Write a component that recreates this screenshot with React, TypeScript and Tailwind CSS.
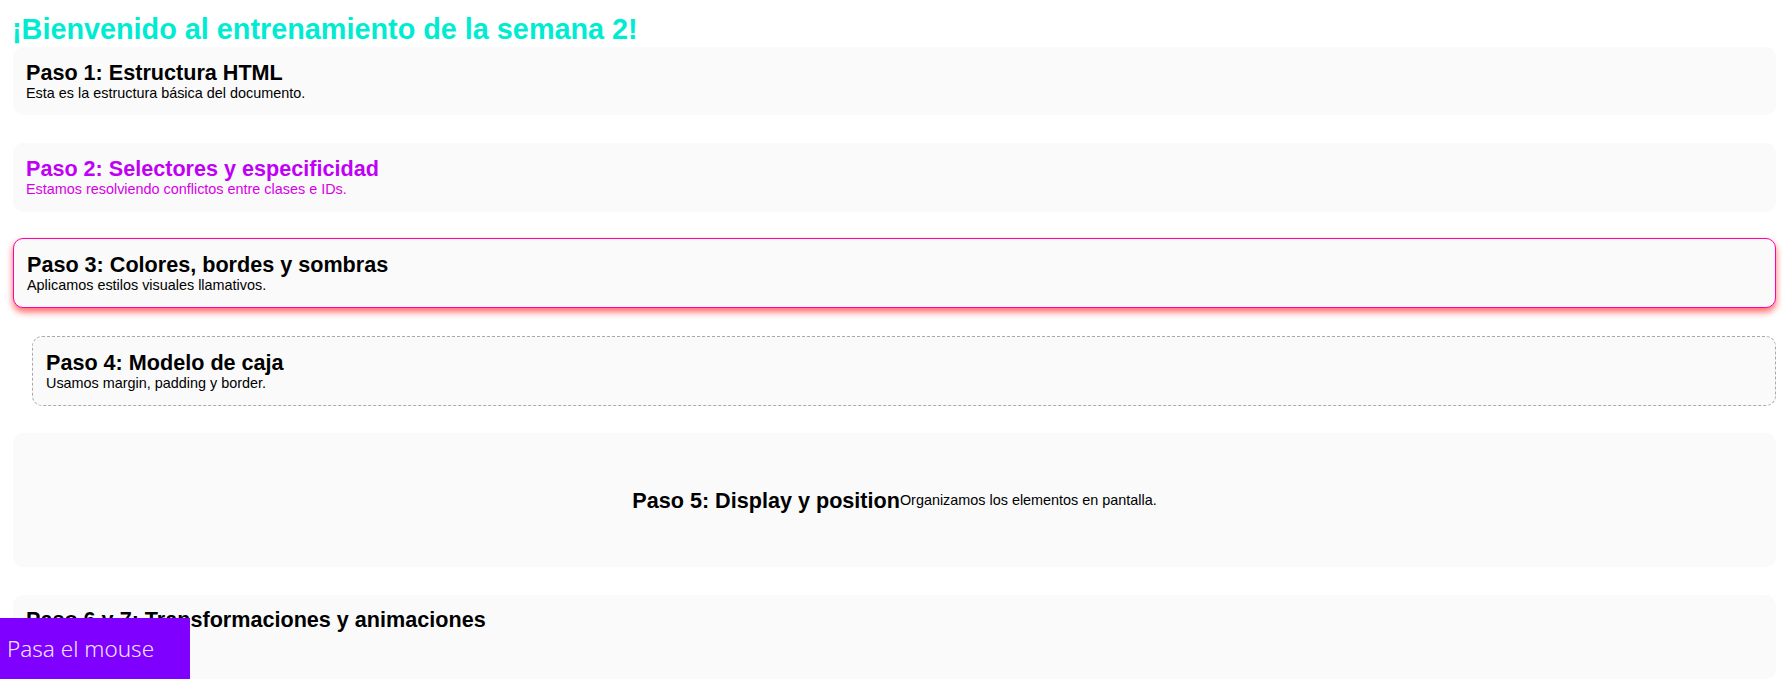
export default function App() {
  const sans = { fontFamily: '"Liberation Sans", Arial, sans-serif' };
  return (
    <div
      className="relative min-h-[700px] bg-white pl-[13px] pr-[7px] pt-[13px] text-black"
      style={sans}
    >
      <h1 className="ml-[-1px] text-[28.8px] font-bold leading-[33px] text-[#00ecd2]">
        ¡Bienvenido al entrenamiento de la semana 2!
      </h1>

      <div className="mt-[1px] flex flex-col gap-[28px]">
        <section className="rounded-[10px] bg-[#fafafa] p-[13px]">
          <h2 className="text-[21.6px] font-bold leading-[25px]">
            Paso 1: Estructura HTML
          </h2>
          <p className="text-[14.4px] leading-[17px]">
            Esta es la estructura básica del documento.
          </p>
        </section>

        <section className="rounded-[10px] bg-[#fafafa] px-[13px] pb-[14px] pt-[13px]">
          <h2 className="text-[21.6px] font-bold leading-[25px] text-[#c000f5]">
            Paso 2: Selectores y especificidad
          </h2>
          <p className="text-[14.4px] leading-[17px] text-[#d600e6]">
            Estamos resolviendo conflictos entre clases e IDs.
          </p>
        </section>

        <section className="-mt-[2px] rounded-[10px] border border-[#ff00aa] bg-[#fafafa] p-[13px] shadow-[0_4px_7px_rgba(255,0,0,0.6)]">
          <h2 className="text-[21.6px] font-bold leading-[25px]">
            Paso 3: Colores, bordes y sombras
          </h2>
          <p className="text-[14.4px] leading-[17px]">
            Aplicamos estilos visuales llamativos.
          </p>
        </section>

        <section className="ml-[19px] rounded-[10px] border border-dashed border-[#aaaaaa] bg-[#fafafa] p-[13px]">
          <h2 className="text-[21.6px] font-bold leading-[25px]">
            Paso 4: Modelo de caja
          </h2>
          <p className="text-[14.4px] leading-[17px]">
            Usamos margin, padding y border.
          </p>
        </section>

        <section className="-mt-[1px] flex h-[134px] items-center justify-center rounded-[10px] bg-[#fafafa] p-[13px]">
          <h2 className="text-[21.6px] font-bold leading-[25px]">
            Paso 5: Display y position
          </h2>
          <p className="text-[14.4px] leading-[17px]">
            Organizamos los elementos en pantalla.
          </p>
        </section>

        <section className="h-[84px] rounded-[10px] bg-[#fafafa] px-[13px] pt-[12px]">
          <h2 className="text-[21.6px] font-bold leading-[25px]">
            Paso 6 y 7: Transformaciones y animaciones
          </h2>
        </section>
      </div>

      <button
        className="absolute left-0 top-[618px] flex h-[61px] w-[190px] items-center bg-[#7f00ff] pl-[7px] text-[22.5px] font-light text-[#eee4ff]"
        style={{ fontFamily: '"Noto Sans", "Open Sans", sans-serif' }}
      >
        Pasa el mouse
      </button>
    </div>
  );
}
